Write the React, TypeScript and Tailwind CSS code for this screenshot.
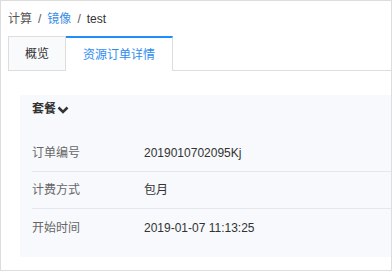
import React from "react";

const font = { fontFamily: '"Liberation Sans", "Noto Sans CJK SC", sans-serif' };

export default function App() {
  const rows = [
    { label: "订单编号", value: "2019010702095Kj" },
    { label: "计费方式", value: "包月" },
    { label: "开始时间", value: "2019-01-07 11:13:25" },
  ];
  return (
    <div
      style={font}
      className="w-[392px] h-[271px] box-border border border-[#dddddd] bg-white overflow-hidden text-[12px]"
    >
      <div className="h-[35px] pl-[7px] flex items-center text-[12px] text-[#555]">
        <span>计算</span>
        <span className="mx-[6px] text-[#555]">/</span>
        <span className="text-[#3a8ee6]">镜像</span>
        <span className="mx-[6px] text-[#555]">/</span>
        <span className="text-[#333]">test</span>
      </div>
      <div className="flex pl-[7px]">
        <div className="h-[35px] px-[16px] flex items-center border border-[#dddddd] bg-[#f9fafc] text-[#333] box-border">
          概览
        </div>
        <div className="h-[35px] px-[17px] flex items-center border-t-2 border-t-[#1f8efa] border-r border-r-[#dddddd] bg-white text-[#2d8cf0] box-border">
          资源订单详情
        </div>
        <div className="flex-1 h-[35px] border-b border-[#dddddd]" />
      </div>
      <div className="mt-[24px] ml-[19px] bg-[#f7f9fc] pl-[12px] pb-[11px]">
        <div className="h-[28px] flex items-center font-bold text-[#333] text-[12px]">
          <span>套餐</span>
          <svg width="12" height="8" viewBox="0 0 12 8" className="ml-[1px] mt-[1px]">
            <polyline points="1.5,1.5 6,6 10.5,1.5" fill="none" stroke="#333" strokeWidth="2.5" />
          </svg>
        </div>
        <div className="mt-[12px]">
          {rows.map((r, i) => (
            <div
              key={r.label}
              className={
                i < rows.length - 1
                  ? "h-[37px] flex items-center border-b border-[#e4e8ee]"
                  : "h-[37px] flex items-center"
              }
            >
              <span className="w-[112px] text-[#666]">{r.label}</span>
              <span className="text-[#333]">{r.value}</span>
            </div>
          ))}
        </div>
      </div>
    </div>
  );
}
